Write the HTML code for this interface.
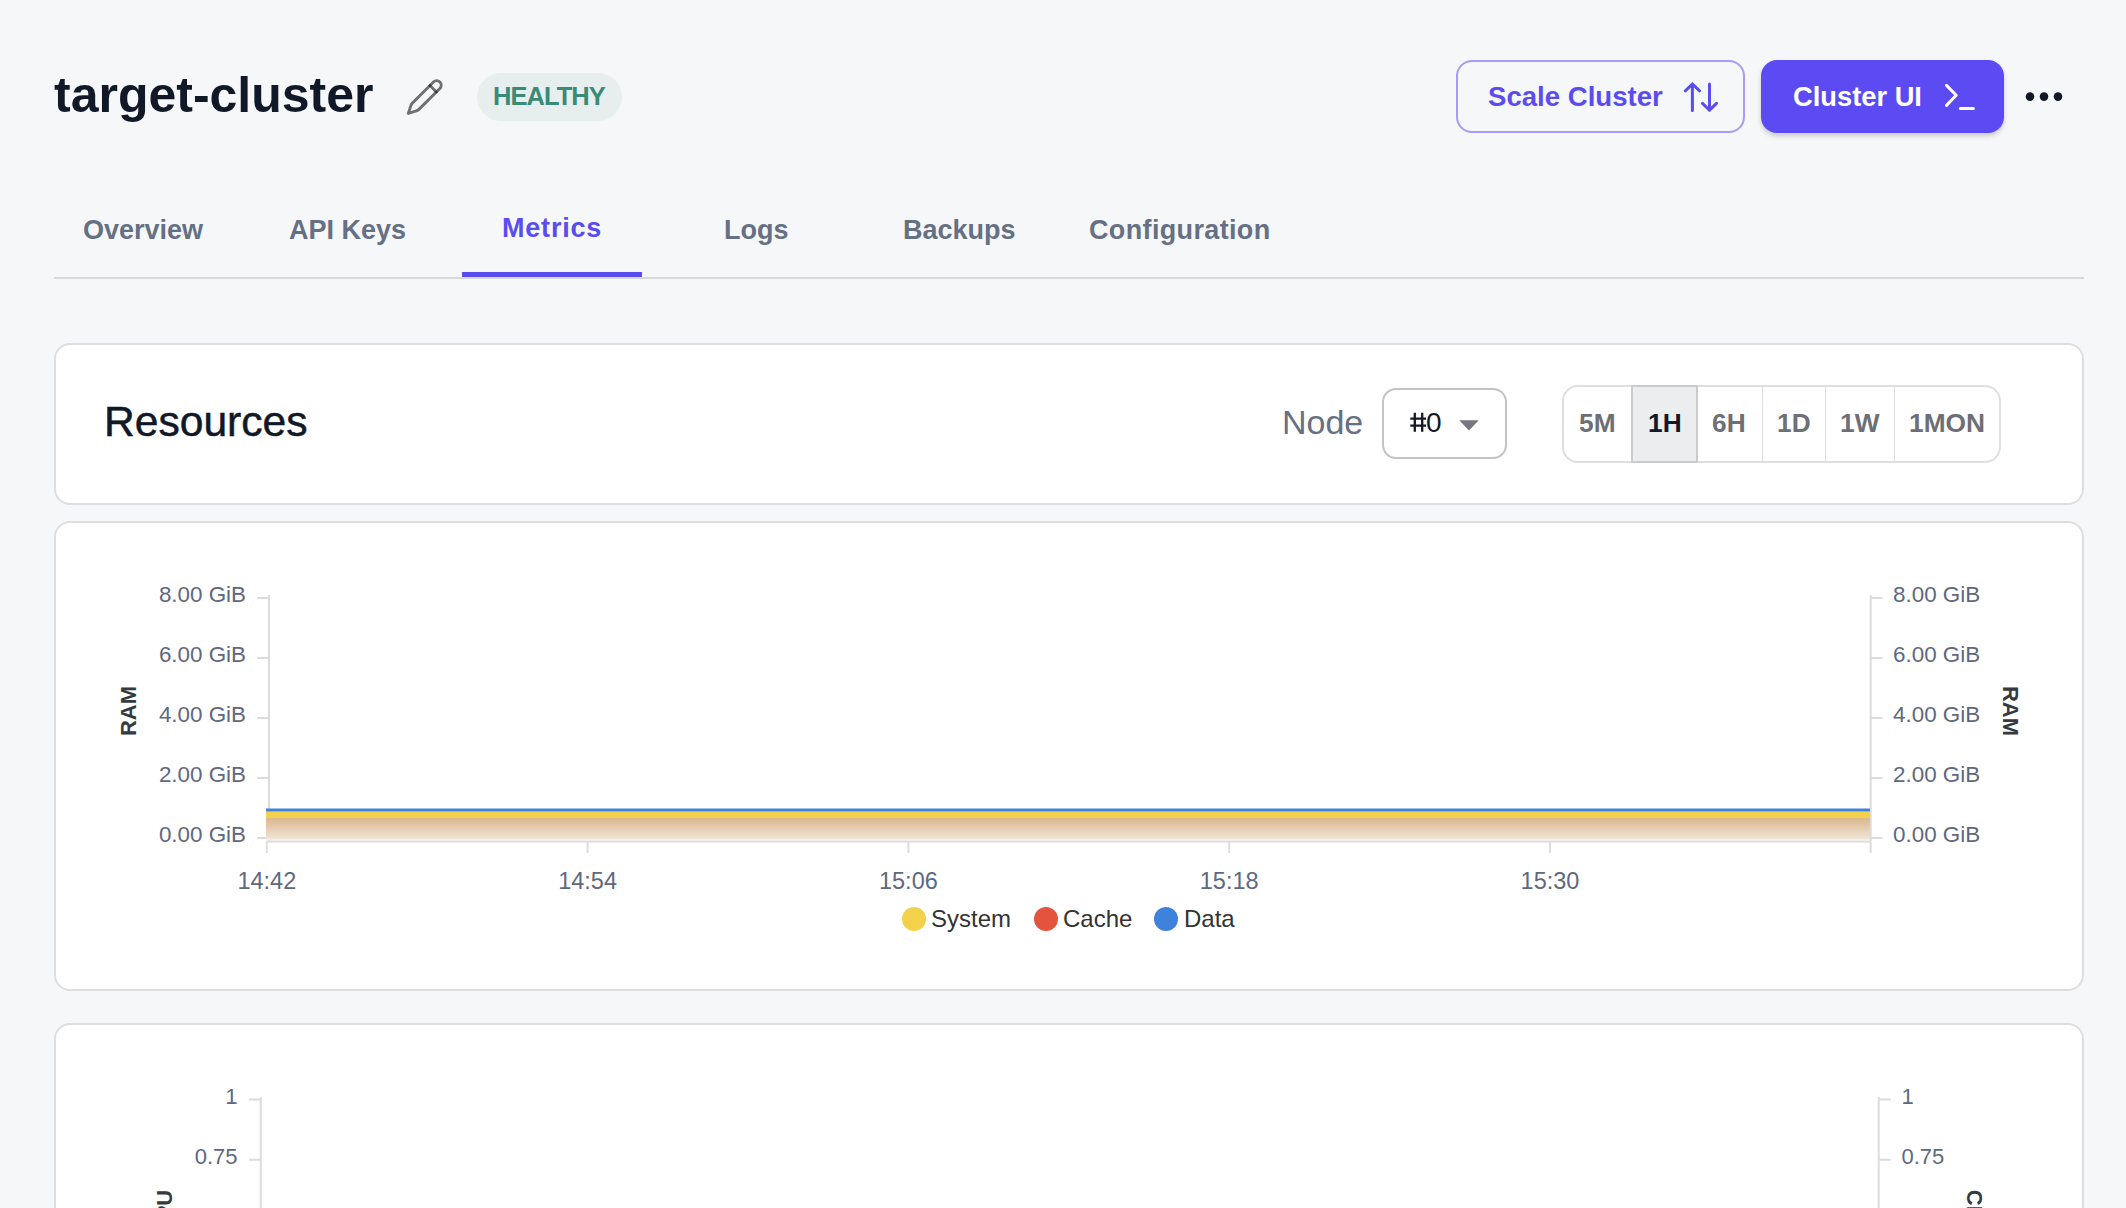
<!DOCTYPE html>
<html>
<head>
<meta charset="utf-8">
<style>
html,body{margin:0;padding:0;}
html{background:#f6f7f9;overflow:hidden;}
body{width:2126px;height:1208px;overflow:hidden;background:#f6f7f9;position:relative;font-family:"Liberation Sans",sans-serif;}
.t{position:absolute;white-space:nowrap;line-height:1;}
#res{-webkit-text-stroke:0.5px #111827;}
.m{-webkit-text-stroke:1.3px currentColor;}
.b{font-weight:bold;}
.card{position:absolute;left:54px;width:2026px;background:#fff;border:2px solid #dedede;border-radius:16px;}
svg{position:absolute;left:0;top:0;overflow:visible;}
</style>
</head>
<body>
<!-- Header -->
<div class="t b" id="title" style="left:54px;top:70px;font-size:50px;color:#111827;">target-cluster</div>
<svg width="2126" height="1208" style="pointer-events:none">
  <!-- pencil -->
  <g fill="none" stroke="#18181b" stroke-width="2.9" stroke-linecap="round" stroke-linejoin="round">
    <path stroke-opacity="0.6" d="M430 85.45L433.43 82.03A4.55 4.55 0 0 1 439.87 88.47L419.2 109.1Q418 110.3 416.4 110.8L408.3 113.4L410.9 105.6Q411.5 103.95 412.6 102.85Z"/>
    <path stroke-opacity="0.6" d="M430 85.45L436.4 91.9"/>
  </g>
</svg>
<div style="position:absolute;left:477px;top:73px;width:145px;height:48px;border-radius:24px;background:#e6eeee;"></div>
<div class="t b" id="healthy" style="left:493px;top:84px;font-size:25.5px;letter-spacing:-0.95px;color:#3a8a78;">HEALTHY</div>

<div style="position:absolute;left:1456px;top:60px;width:285px;height:69px;border:2px solid #a69cf8;border-radius:16px;"></div>
<div class="t b" id="scale" style="left:1488px;top:83px;font-size:27.6px;color:#5b4cf0;">Scale Cluster</div>
<div style="position:absolute;left:1761px;top:60px;width:243px;height:73px;border-radius:16px;background:#5c4af2;box-shadow:0 3px 5px rgba(0,0,0,0.18);"></div>
<div class="t b" id="clui" style="left:1793px;top:83px;font-size:27.3px;color:#fff;">Cluster UI</div>
<svg width="2126" height="1208">
  <g fill="none" stroke="#5b4cf0" stroke-width="3" stroke-linecap="round" stroke-linejoin="round">
    <path d="M1692.4 110.5V84M1685.3 90.8L1692.4 84L1699.6 90.8"/>
    <path d="M1709.5 84V110.3M1702.5 103.4L1709.5 110.3L1716.5 103.4"/>
  </g>
  <g fill="none" stroke="#fff" stroke-width="3" stroke-linecap="round" stroke-linejoin="round">
    <path d="M1946.5 85.4L1956.2 95.3L1946.5 105.4M1960.3 108.5H1973.4"/>
  </g>
  <g fill="#111827">
    <circle cx="2030" cy="96.6" r="4.3"/>
    <circle cx="2044" cy="96.6" r="4.3"/>
    <circle cx="2058" cy="96.6" r="4.3"/>
  </g>
</svg>

<!-- Tabs -->
<div style="position:absolute;left:54px;top:277px;width:2030px;height:2px;background:#d9d9dc;"></div>
<div style="position:absolute;left:462px;top:272px;width:180px;height:5px;background:#5b4cf0;"></div>
<div class="t b" id="tab1" style="left:83px;top:217px;font-size:27px;letter-spacing:0px;color:#667085;">Overview</div>
<div class="t b" id="tab2" style="left:289px;top:217px;font-size:27px;letter-spacing:0px;color:#667085;">API Keys</div>
<div class="t b" id="tab3" style="left:502px;top:215px;font-size:27px;letter-spacing:0.8px;color:#5b4cf0;">Metrics</div>
<div class="t b" id="tab4" style="left:724px;top:217px;font-size:27px;letter-spacing:0px;color:#667085;">Logs</div>
<div class="t b" id="tab5" style="left:903px;top:217px;font-size:27px;letter-spacing:0px;color:#667085;">Backups</div>
<div class="t b" id="tab6" style="left:1089px;top:217px;font-size:27px;letter-spacing:0.35px;color:#667085;">Configuration</div>

<!-- Card 1 -->
<div class="card" style="top:343px;height:158px;"></div>
<div class="t" id="res" style="left:104px;top:400px;font-size:42.6px;color:#111827;">Resources</div>
<div class="t" id="node" style="left:1282px;top:405px;font-size:34px;color:#667085;">Node</div>
<div style="position:absolute;left:1382px;top:388px;width:121px;height:67px;border:2px solid #c4c4c6;border-radius:14px;background:#fff;"></div>
<div class="t" id="n0" style="left:1426px;top:409px;font-size:28px;color:#111827;">0</div>
<svg width="2126" height="1208"><path d="M1459.2 420.2H1478.8L1469 430.6Z" fill="#77777d"/><path d="M1414.8 412.8V431.8M1422.2 412.8V431.8M1410.3 418.6H1426M1410.3 425.6H1426" stroke="#111827" stroke-width="2.3" fill="none"/></svg>

<div style="position:absolute;left:1562px;top:385px;width:435px;height:74px;border:2px solid #dfdfe2;border-radius:16px;background:#fff;"></div>
<div style="position:absolute;left:1761.5px;top:386px;width:1.6px;height:76px;background:#dfdfe2;"></div>
<div style="position:absolute;left:1824.5px;top:386px;width:1.6px;height:76px;background:#dfdfe2;"></div>
<div style="position:absolute;left:1893.5px;top:386px;width:1.6px;height:76px;background:#dfdfe2;"></div>
<div style="position:absolute;left:1631px;top:385px;width:63px;height:74px;border:2px solid #cbcbcf;background:#ecedef;"></div>
<div class="t b" style="left:1579px;top:410px;font-size:26.3px;color:#6e6f76;">5M</div>
<div class="t b" style="left:1648px;top:410px;font-size:26.3px;color:#111827;">1H</div>
<div class="t b" style="left:1712px;top:410px;font-size:26.3px;color:#6e6f76;">6H</div>
<div class="t b" style="left:1777px;top:410px;font-size:26.3px;color:#6e6f76;">1D</div>
<div class="t b" style="left:1840px;top:410px;font-size:26.3px;color:#6e6f76;">1W</div>
<div class="t b" style="left:1909px;top:410px;font-size:26.3px;color:#6e6f76;">1MON</div>

<!-- Card 2 -->
<div class="card" style="top:521px;height:466px;"></div>
<!-- Card 3 -->
<div class="card" style="top:1023px;height:400px;"></div>

<svg width="2126" height="1208" font-family="Liberation Sans, sans-serif">
  <!-- RAM chart -->
  <defs>
    <linearGradient id="ga" x1="0" y1="0" x2="0" y2="1">
      <stop offset="0" stop-color="#dab68c"/>
      <stop offset="0.93" stop-color="#efe4d5"/><stop offset="0.94" stop-color="#f4efe9"/><stop offset="1" stop-color="#f4efe9"/>
    </linearGradient>
  </defs>
  <g stroke="#dcdcdc" stroke-width="2" fill="none">
    <path d="M269 595V841M257 598H269M257 658H269M257 718H269M257 778H269M257 838H269"/>
    <path d="M1870.7 595V841M1870.7 598H1882.5M1870.7 658H1882.5M1870.7 718H1882.5M1870.7 778H1882.5M1870.7 838H1882.5"/>
    <path d="M266.8 841.4H1870.7M266.8 841.4V853M587.6 841.4V853M908.4 841.4V853M1229.2 841.4V853M1550 841.4V853M1870.7 841.4V853"/>
  </g>
  <rect x="266" y="817" width="1604" height="23.4" fill="url(#ga)"/>
  <rect x="266" y="811.5" width="1604" height="6.5" fill="#f3d14b"/>
  <rect x="266" y="808.5" width="1604" height="3" fill="#3f82dc"/>
  <g font-size="22.4" fill="#5e6880" text-anchor="end">
    <text x="246" y="602">8.00 GiB</text>
    <text x="246" y="662">6.00 GiB</text>
    <text x="246" y="722">4.00 GiB</text>
    <text x="246" y="782">2.00 GiB</text>
    <text x="246" y="842">0.00 GiB</text>
  </g>
  <g font-size="22.4" fill="#5e6880" text-anchor="start" transform="translate(1,0)">
    <text x="1892" y="602">8.00 GiB</text>
    <text x="1892" y="662">6.00 GiB</text>
    <text x="1892" y="722">4.00 GiB</text>
    <text x="1892" y="782">2.00 GiB</text>
    <text x="1892" y="842">0.00 GiB</text>
  </g>
  <g font-size="23.5" fill="#5e6880" text-anchor="middle">
    <text x="266.8" y="889">14:42</text>
    <text x="587.6" y="889">14:54</text>
    <text x="908.4" y="889">15:06</text>
    <text x="1229.2" y="889">15:18</text>
    <text x="1550" y="889">15:30</text>
  </g>
  <text transform="translate(135.5,711) rotate(-90)" font-size="22" font-weight="bold" fill="#343a3f" text-anchor="middle">RAM</text>
  <text transform="translate(2003,711) rotate(90)" font-size="22" font-weight="bold" fill="#343a3f" text-anchor="middle">RAM</text>
  <!-- legend -->
  <circle cx="914" cy="919" r="12" fill="#f3d14b"/>
  <circle cx="1046" cy="919" r="12" fill="#e3533d"/>
  <circle cx="1166" cy="919" r="12" fill="#3f82dc"/>
  <g font-size="24" fill="#333">
    <text x="931" y="927.3">System</text>
    <text x="1063" y="927.3">Cache</text>
    <text x="1184" y="927.3">Data</text>
  </g>

  <!-- CPU chart (partial) -->
  <g stroke="#dcdcdc" stroke-width="2" fill="none">
    <path d="M260.7 1097V1208M248.8 1099.5H260.7M248.8 1159.7H260.7"/>
    <path d="M1878.7 1097V1208M1878.7 1099.5H1890.8M1878.7 1159.7H1890.8"/>
  </g>
  <g font-size="22" fill="#5e6880">
    <text x="237.5" y="1104" text-anchor="end">1</text>
    <text x="237.5" y="1164.4" text-anchor="end">0.75</text>
    <text x="1901.5" y="1104">1</text>
    <text x="1901.5" y="1164.4">0.75</text>
  </g>
  <text transform="translate(172,1213) rotate(-90)" font-size="22" font-weight="bold" fill="#343a3f" text-anchor="middle">CPU</text>
  <text transform="translate(1967,1213) rotate(90)" font-size="22" font-weight="bold" fill="#343a3f" text-anchor="middle">CPU</text>
</svg>
<script>
(function(){var w=window.innerWidth;if(w&&Math.abs(w-2126)>2){var k=w/2126;document.body.style.transformOrigin="0 0";document.body.style.transform="scale("+k+")";}})();
</script>
</body>
</html>
